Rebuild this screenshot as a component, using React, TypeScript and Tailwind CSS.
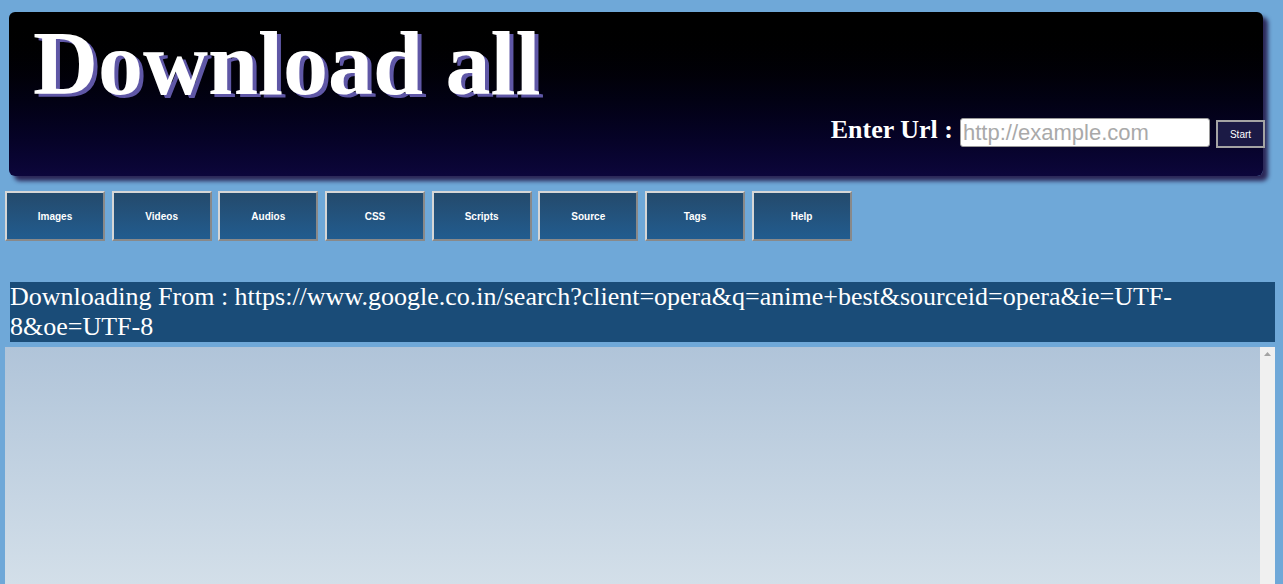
const tabs = ["Images", "Videos", "Audios", "CSS", "Scripts", "Source", "Tags", "Help"];

export default function App() {
  return (
    <div className="h-[584px] overflow-hidden bg-[#6fa8d8] font-['Liberation_Serif','Times_New_Roman',serif]">
      {/* Header */}
      <header className="ml-[9px] mt-[12px] w-[1254px] h-[164px] rounded-[6px] bg-linear-to-b from-black to-[#0c063b] shadow-[5px_5px_4px_#2c2858] pt-[7px] pl-[24px] flex flex-col">
        <h1 className="text-[90px] font-bold leading-none text-white [text-shadow:4px_3px_0_#5f57a6]">
          Download all
        </h1>
        <div className="mt-[7px] -mr-[2px] h-[32px] flex items-center justify-end">
          <span className="mb-[4px] text-[26px] leading-[28px] font-bold text-white">Enter Url :</span>
          <input
            type="text"
            placeholder="http://example.com"
            className="ml-[7px] w-[250px] h-[29px] px-[2px] bg-white border border-[#9a9a9a] rounded-[3px] text-[22px] font-['Liberation_Sans',Arial,sans-serif] placeholder:text-[#a9a9a9] outline-none"
          />
          <button className="self-end ml-[6px] w-[49px] h-[28px] bg-[#1b1a45] border-2 border-[#a4a4a4] text-[10px] text-white font-['Liberation_Sans',Arial,sans-serif]">
            Start
          </button>
        </div>
      </header>

      {/* Tabs */}
      <nav className="mt-[15px] ml-[5px] flex gap-[6.67px]">
        {tabs.map((t) => (
          <button
            key={t}
            className="w-[100px] h-[50px] border-2 border-t-[#d6d6d6] border-l-[#d6d6d6] border-r-[#898989] border-b-[#898989] bg-linear-to-b from-[#244a6c] to-[#215c8f] text-[10px] font-bold text-white font-['Liberation_Sans',Arial,sans-serif]"
          >
            {t}
          </button>
        ))}
      </nav>

      {/* Source bar */}
      <div className="mt-[41px] ml-[10px] w-[1265px] bg-[#1a4c78] text-white text-[26px] leading-[30px]">
        Downloading From : https://www.google.co.in/search?client=opera&amp;q=anime+best&amp;sourceid=opera&amp;ie=UTF-8&amp;oe=UTF-8
      </div>

      {/* Result frame */}
      <div className="mt-[5px] ml-[5px] w-[1270px] h-[237px] bg-linear-to-b from-[#b0c4d9] to-[#d3dfe9] flex justify-end">
        <div className="w-[15px] bg-[#f0f0f0] flex justify-center pt-[5px]">
          <svg width="7" height="4" viewBox="0 0 7 4">
            <path d="M3.5 0 L7 4 L0 4 Z" fill="#a3a3a3" />
          </svg>
        </div>
      </div>
    </div>
  );
}
